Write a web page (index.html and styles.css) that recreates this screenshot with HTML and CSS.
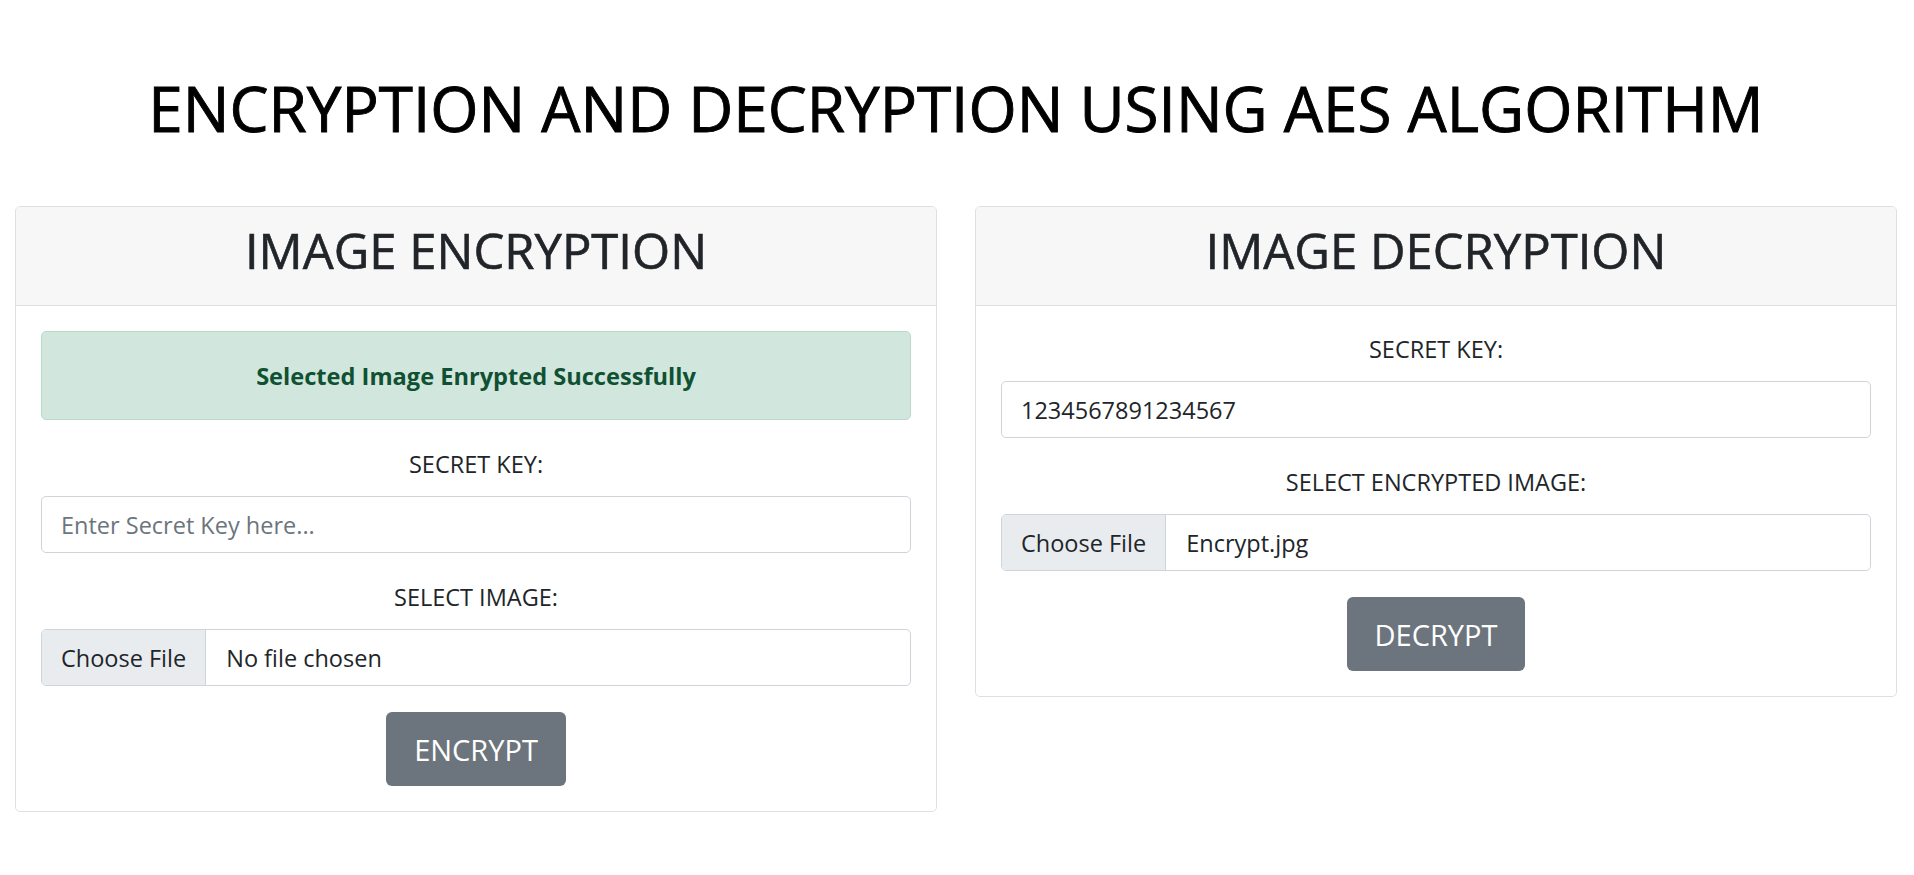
FILE: index.html
```html
<!DOCTYPE html>
<html lang="en">
<head>
<meta charset="utf-8">
<title>Encryption and Decryption using AES Algorithm</title>
<link rel="stylesheet" href="styles.css">
</head>
<body>
<div class="page">
  <h1 class="title">ENCRYPTION AND DECRYPTION USING AES ALGORITHM</h1>
  <div class="grid">
    <section class="card">
      <div class="card-header"><h2 class="card-title">IMAGE ENCRYPTION</h2></div>
      <div class="card-body">
        <div class="alert">Selected Image Enrypted Successfully</div>
        <div class="group">
          <label class="label" for="ekey">SECRET KEY:</label>
          <input class="field" id="ekey" type="text" placeholder="Enter Secret Key here...">
        </div>
        <div class="group">
          <label class="label">SELECT IMAGE:</label>
          <div class="file"><span class="file-btn">Choose File</span><span class="file-name">No file chosen</span></div>
        </div>
        <div class="actions"><button class="btn" type="button">ENCRYPT</button></div>
      </div>
    </section>
    <section class="card">
      <div class="card-header"><h2 class="card-title">IMAGE DECRYPTION</h2></div>
      <div class="card-body">
        <div class="group">
          <label class="label" for="dkey">SECRET KEY:</label>
          <input class="field" id="dkey" type="text" value="1234567891234567">
        </div>
        <div class="group">
          <label class="label">SELECT ENCRYPTED IMAGE:</label>
          <div class="file"><span class="file-btn">Choose File</span><span class="file-name">Encrypt.jpg</span></div>
        </div>
        <div class="actions"><button class="btn" type="button">DECRYPT</button></div>
      </div>
    </section>
  </div>
</div>
</body>
</html>
```
FILE: styles.css
```css
* { box-sizing: border-box; }
html, body { margin: 0; background: #fff; }
body {
  font-family: "Open Sans", "Noto Sans", sans-serif;
  font-size: 23.5px;
  color: #212529;
}
.page {
  padding: 71px 17px 0 15px;
}
.title {
  margin: 0 0 61px;
  font-size: 62px;
  line-height: 74px;
  font-weight: 400;
  text-align: center;
  color: #000;
  -webkit-text-stroke: 0.9px #000;
}
.grid {
  display: grid;
  grid-template-columns: 1fr 1fr;
  column-gap: 38px;
  align-items: start;
}
.card {
  border: 1px solid #dfdfdf;
  border-radius: 5px;
  background: #fff;
  overflow: hidden;
}
.card-header {
  background: #f7f7f7;
  border-bottom: 1px solid #dfdfdf;
  padding: 13.5px 20px 25.5px;
}
.card-title {
  margin: 0;
  font-size: 49px;
  line-height: 59px;
  font-weight: 400;
  text-align: center;
  color: #212529;
  -webkit-text-stroke: 0.6px #212529;
}
.card-body {
  padding: 25px;
}
.alert {
  height: 89px;
  display: flex;
  align-items: center;
  justify-content: center;
  background: #d1e7dd;
  border: 1px solid #badbcc;
  border-radius: 5px;
  color: #0f5132;
  font-weight: 700;
  font-size: 23.6px;
  margin-bottom: 26px;
}
.group {
  display: flex;
  flex-direction: column;
  margin-bottom: 26px;
}
.label {
  display: block;
  text-align: center;
  line-height: 37.5px;
  margin-bottom: 12.5px;
  color: #212529;
}
.field {
  display: block;
  width: 100%;
  height: 57px;
  padding: 0 19px;
  border: 1px solid #ced4da;
  border-radius: 5px;
  font-family: inherit;
  font-size: 23.5px;
  color: #212529;
  background: #fff;
  outline: none;
}
.field::placeholder { color: #6c757d; opacity: 1; }
.file {
  display: flex;
  align-items: stretch;
  height: 57px;
  border: 1px solid #ced4da;
  border-radius: 5px;
  overflow: hidden;
  background: #fff;
}
.file-btn {
  display: flex;
  align-items: center;
  padding: 0 19px;
  background: #e9ecef;
  border-right: 1px solid #ced4da;
  color: #212529;
}
.file-name {
  display: flex;
  align-items: center;
  padding-left: 20px;
  color: #212529;
}
.actions {
  display: flex;
  justify-content: center;
}
.btn {
  height: 74px;
  padding: 0 28px;
  border: 0;
  border-radius: 6px;
  background: #6c757d;
  color: #fff;
  font-family: inherit;
  font-size: 29px;
  cursor: pointer;
}
```
